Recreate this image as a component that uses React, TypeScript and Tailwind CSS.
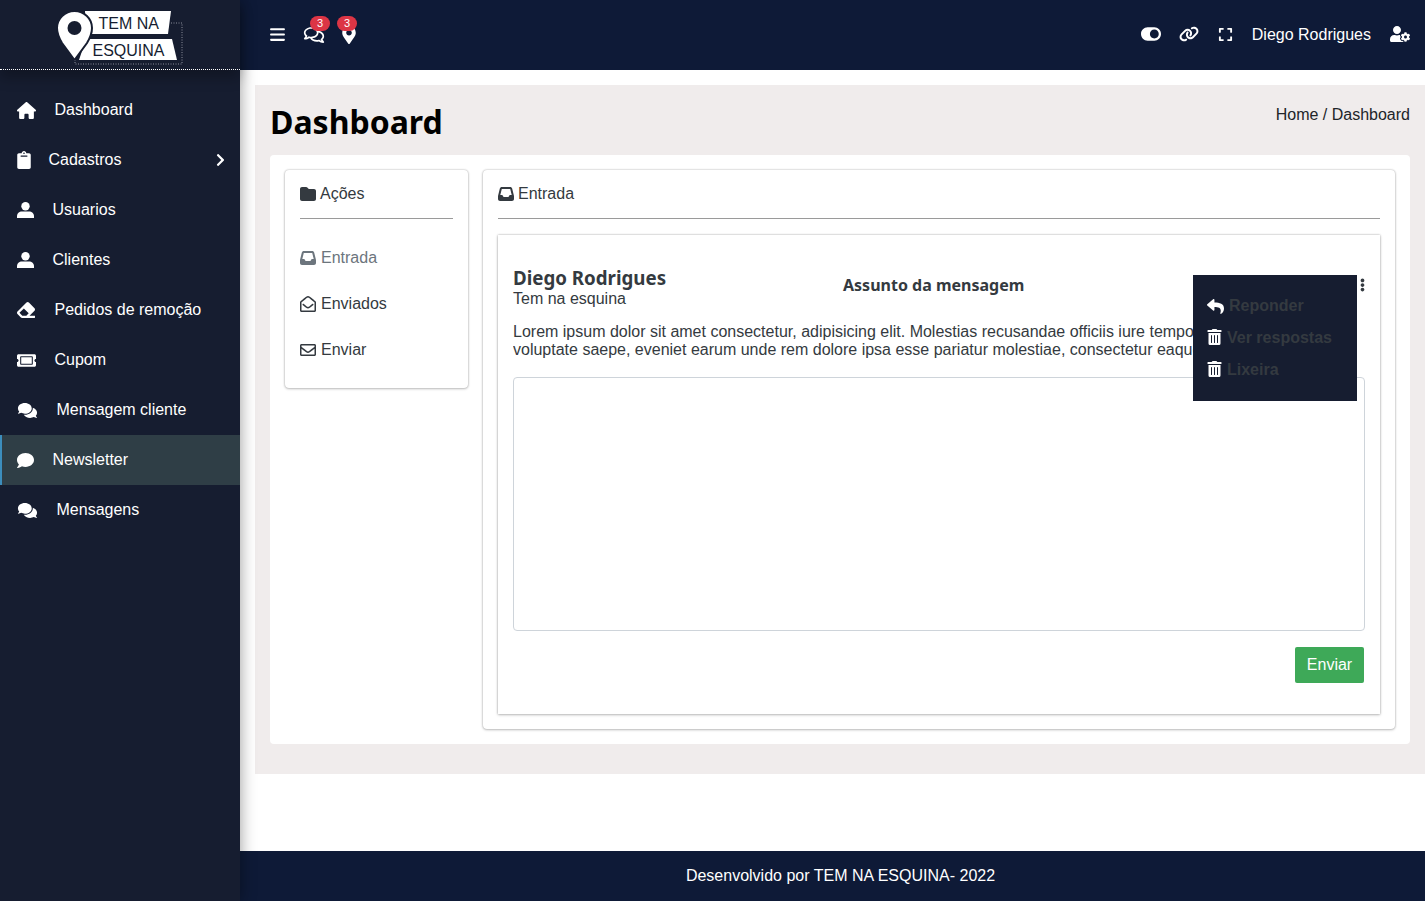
import React from "react";
import {
  FaChevronRight,
  FaClipboard,
  FaComment,
  FaComments,
  FaEllipsisV,
  FaEraser,
  FaExpand,
  FaMapMarkerAlt,
  FaRegComments,
  FaRegEnvelope,
  FaRegEnvelopeOpen,
  FaReply,
  FaTicketAlt,
  FaToggleOn,
  FaTrashAlt,
  FaUserCog,
} from "react-icons/fa";
import { FaBars, FaFolder, FaHouse, FaInbox, FaLink } from "react-icons/fa6";

// wide shoulders, the stock user glyph is too narrow here
const UserIcon = ({ className }: { className?: string }) => (
  <svg viewBox="0 0 17 16" fill="currentColor" className={className}>
    <circle cx="8.500" cy="4.200" r="4.200" />
    <path d="M0 16v-1.800C0 11.500 2.200 9.500 5 9.500h7c2.800 0 5 2 5 4.700V16z" />
  </svg>
);

const menu = [
  { label: "Dashboard", icon: FaHouse, cls: "h-[17px] w-[19px]", box: "w-[37.5px]" },
  { label: "Cadastros", icon: FaClipboard, cls: "h-[18px] w-[14px]", box: "w-[31.5px]", arrow: true },
  { label: "Usuarios", icon: UserIcon, cls: "h-[16px] w-[17px]", box: "w-[35.5px]" },
  { label: "Clientes", icon: UserIcon, cls: "h-[16px] w-[17px]", box: "w-[35.5px]" },
  { label: "Pedidos de remoção", icon: FaEraser, cls: "h-[18px] w-[18px]", box: "w-[37.5px]" },
  { label: "Cupom", icon: FaTicketAlt, cls: "h-[17px] w-[19px]", box: "w-[37.5px]" },
  { label: "Mensagem cliente", icon: FaComments, cls: "h-[17px] w-[21px]", box: "w-[39.5px]" },
  { label: "Newsletter", icon: FaComment, cls: "h-[17px] w-[17px]", box: "w-[35.5px]", active: true },
  { label: "Mensagens", icon: FaComments, cls: "h-[17px] w-[21px]", box: "w-[39.5px]" },
];

const Logo = () => (
  <svg width="130" height="56" viewBox="0 0 130 56" className="block">
    <polygon points="29,1 115,1 112,24 30,24" fill="#fff" />
    <polygon points="30,29 116,29 121,50 23,50" fill="#fff" />
    <path
      d="M1 18a17.500 17 0 0 1 35 0c0 6-2 10-5 15l-12.500 17L6 33c-3-5-5-9-5-15z"
      fill="#fff"
      stroke="#161d30"
      strokeWidth="2"
    />
    <circle cx="18.500" cy="18" r="7" fill="#161d30" />
    <path d="M115 13H126V54H19V50" fill="none" stroke="#8b8f9b" strokeWidth="1" strokeDasharray="1 1.500" />
    <text x="42.500" y="18.500" fontFamily="Liberation Sans, sans-serif" fontSize="16" fill="#161d30">
      TEM NA
    </text>
    <text x="36.500" y="46" fontFamily="Liberation Sans, sans-serif" fontSize="16" fill="#161d30">
      ESQUINA
    </text>
  </svg>
);

const Sidebar = () => (
  <aside className="w-[240px] shrink-0 bg-[#161d30] text-white min-h-[901px] shadow-[0_0_15px_rgba(0,0,0,0.4)] z-10">
    <div className="h-[70px] flex pl-[56px] pt-[10px] border-b border-dotted border-white shadow-[0_8px_12px_rgba(0,0,0,0.25)]">
      <Logo />
    </div>
    <nav className="pt-[15px]">
      {menu.map((item) => {
        const Icon = item.icon;
        return (
          <div
            key={item.label}
            className={`h-[50px] flex items-center pr-[15px] text-base ${
              item.active ? "bg-[#2f3e46] border-l-2 border-[#3c8dbc] pl-[15px]" : "pl-[17px]"
            }`}
          >
            <span className={`${item.box} shrink-0`}>
              <Icon className={item.cls} />
            </span>
            <span className="flex-1">{item.label}</span>
            {item.arrow && <FaChevronRight className="h-[14px] w-[9px]" />}
          </div>
        );
      })}
    </nav>
  </aside>
);

const Badge = ({ className }: { className: string }) => (
  <span
    className={`absolute w-[20px] h-[15px] rounded-[8px] bg-[#dc3545] text-white text-[11px] leading-[15px] text-center ${className}`}
  >
    3
  </span>
);

const Header = () => (
  <header className="h-[70px] shrink-0 bg-[#0e1a37] text-white flex items-center pl-[30px] pr-[15px] pb-[2px]">
    <FaBars className="h-[17px] w-[15px]" />
    <span className="relative ml-[18px] mt-[1px]">
      <FaRegComments className="h-[18px] w-[22px]" />
      <Badge className="-top-[10px] left-[7px]" />
    </span>
    <span className="relative ml-[17px] mt-[1px]">
      <FaMapMarkerAlt className="h-[18px] w-[14px]" />
      <Badge className="-top-[10px] left-[-5px]" />
    </span>
    <div className="ml-auto flex items-center">
      <FaToggleOn className="h-[18px] w-[20px]" />
      <FaLink className="h-[16px] w-[20px] ml-[18px]" />
      <FaExpand className="h-[15px] w-[15px] ml-[19px]" />
      <span className="ml-[18.500px] mt-[1px] text-base">Diego Rodrigues</span>
      <FaUserCog className="h-[16px] w-[20px] ml-[19px]" />
    </div>
  </header>
);

const CardTitle = ({ icon, label }: { icon: React.ReactNode; label: string }) => (
  <div className="h-[49px] flex items-center gap-[4px] border-b border-[#9a9a9a] text-[#343a40]">
    {icon}
    <span>{label}</span>
  </div>
);

const SideLink = ({ icon, label, muted }: { icon: React.ReactNode; label: string; muted?: boolean }) => (
  <div className={`h-[46px] flex items-center gap-[5px] ${muted ? "text-[#6c757d]" : "text-[#343a40]"}`}>
    {icon}
    <span>{label}</span>
  </div>
);

const DropItem = ({ icon, label }: { icon: React.ReactNode; label: string }) => (
  <div className="h-[32px] flex items-center gap-[5px]">
    {icon}
    <span>{label}</span>
  </div>
);

const Dropdown = () => (
  <div className="absolute top-[40px] left-[695px] w-[164px] h-[126px] bg-[#161d30] pt-[15px] pl-[14px] font-bold text-base text-[#343a40]">
    <DropItem icon={<FaReply className="h-[17px] w-[17px] text-white" />} label="Reponder" />
    <DropItem icon={<FaTrashAlt className="h-[16px] w-[15px] -mt-[2px] text-white" />} label="Ver respostas" />
    <DropItem icon={<FaTrashAlt className="h-[16px] w-[15px] -mt-[2px] text-white" />} label="Lixeira" />
  </div>
);

const MessageCard = () => (
  <div className="relative mt-[16px] h-[479px] shadow-[0_0_2px_rgba(0,0,0,0.3),0_1px_3px_rgba(0,0,0,0.2)] px-[15px] pt-[33px]">
    <div className="flex">
      <div className="w-[330px]">
        <div className="font-['Noto_Sans',sans-serif] font-bold text-[18.72px] leading-[20px] text-[#343a40]">
          Diego Rodrigues
        </div>
        <div className="mt-[1px] leading-[20px] text-[#343a40]">Tem na esquina</div>
      </div>
      <div className="font-['Noto_Sans',sans-serif] font-bold text-base leading-[20px] text-[#343a40] pt-[7px]">
        Assunto da mensagem
      </div>
      <FaEllipsisV className="absolute right-[15px] top-[43px] h-[14px] w-[5px] text-[#343a40]" />
    </div>
    <p className="mt-[14px] leading-[18px] text-[#343a40] whitespace-nowrap overflow-hidden">
      Lorem ipsum dolor sit amet consectetur, adipisicing elit. Molestias recusandae officiis iure tempore, quam
      <br />
      voluptate saepe, eveniet earum unde rem dolore ipsa esse pariatur molestiae, consectetur eaque ipsa
    </p>
    <div className="mt-[18px] h-[254px] border border-[#ced4da] rounded-[4px]" />
    <div className="mt-[16px] flex justify-end pr-[1px]">
      <button className="w-[69px] h-[36px] rounded-[2px] bg-[#3ea958] text-white text-base">Enviar</button>
    </div>
    <Dropdown />
  </div>
);

export default function App() {
  return (
    <div className="flex min-h-[901px] bg-white font-['Liberation_Sans',Arial,sans-serif] text-base overflow-hidden">
      <Sidebar />
      <div className="flex-1 min-w-0 flex flex-col">
        <Header />
        <main className="flex-1 pt-[15px] pl-[15px]">
          <section className="h-[689px] bg-[#f0ecec] px-[15px]">
            <div className="h-[70px] flex justify-between">
              <h1 className="pt-[17px] font-['Noto_Sans',sans-serif] font-bold text-[32px] leading-[40px] text-black">
                Dashboard
              </h1>
              <div className="pt-[21px] leading-[18px] text-[#212529]">Home / Dashboard</div>
            </div>
            <div className="h-[589px] bg-white rounded-[4px] p-[15px] flex gap-[15px]">
              <div className="w-[183px] h-[218px] rounded-[4px] shadow-[0_0_2px_rgba(0,0,0,0.3),0_1px_3px_rgba(0,0,0,0.2)] px-[15px]">
                <CardTitle icon={<FaFolder className="h-[16px] w-[16px]" />} label="Ações" />
                <div className="pt-[16px]">
                  <SideLink muted icon={<FaInbox className="h-[16px] w-[16px]" />} label="Entrada" />
                  <SideLink icon={<FaRegEnvelopeOpen className="h-[16px] w-[16px]" />} label="Enviados" />
                  <SideLink icon={<FaRegEnvelope className="h-[16px] w-[16px]" />} label="Enviar" />
                </div>
              </div>
              <div className="flex-1 h-[559px] rounded-[4px] shadow-[0_0_2px_rgba(0,0,0,0.3),0_1px_3px_rgba(0,0,0,0.2)] px-[15px]">
                <CardTitle icon={<FaInbox className="h-[16px] w-[16px]" />} label="Entrada" />
                <MessageCard />
              </div>
            </div>
          </section>
        </main>
        <footer className="h-[50px] shrink-0 bg-[#0e1a37] text-white flex items-center justify-center pl-[16px]">
          Desenvolvido por TEM NA ESQUINA- 2022
        </footer>
      </div>
    </div>
  );
}
